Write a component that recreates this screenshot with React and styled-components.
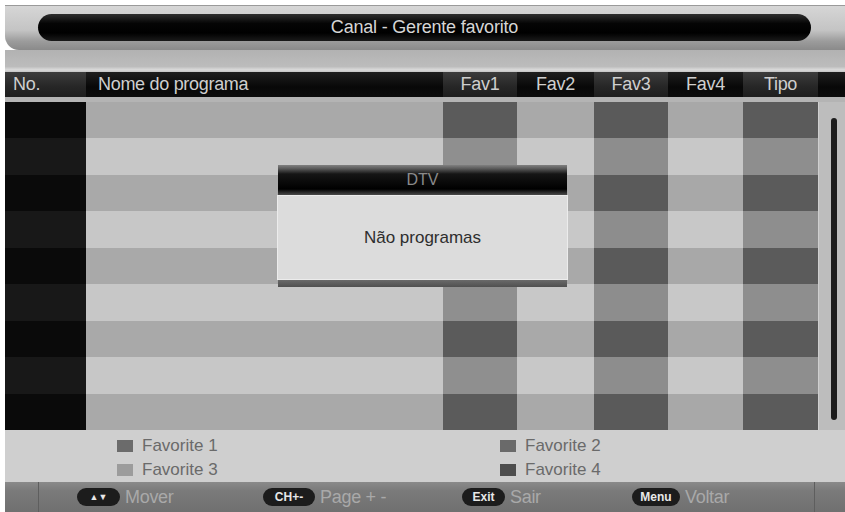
import React from "react";
import styled, { createGlobalStyle } from "styled-components";

const GlobalStyle = createGlobalStyle`
  html, body { margin: 0; padding: 0; background: #fff; }
  body { font-family: "Liberation Sans", Arial, sans-serif; }
`;

const COLS = "81px 357px 74px 77px 74px 75px 75px";

const Screen = styled.div`
  position: relative;
  width: 845px;
  height: 512px;
  box-sizing: border-box;
  padding: 5px 0 0 5px;
  display: flex;
  flex-direction: column;
  background: #fff;
  overflow: hidden;
`;

const TopPanel = styled.div`
  height: 45px;
  box-sizing: border-box;
  padding: 8px 34px 0 33px;
  border-top: 1px solid #9a9a9a;
  border-bottom-left-radius: 14px;
  background: linear-gradient(#d6d6d6 0%, #c4c4c4 55%, #9c9c9c 80%, #8a8a8a 100%);
`;

const TitlePill = styled.div`
  height: 27px;
  border-radius: 14px;
  background: linear-gradient(#2e2e2e 0%, #050505 35%, #000 70%, #1a1a1a 100%);
  color: #d6d6d6;
  font-size: 18px;
  display: flex;
  align-items: center;
  justify-content: center;
  letter-spacing: -0.2px;
`;

const Strip = styled.div`
  height: 22px;
  background: linear-gradient(#b2b2b2 0%, #bcbcbc 75%, #dadada 90%, #c4c4c4 100%);
`;

const Header = styled.div`
  display: grid;
  grid-template-columns: ${COLS} 1fr;
  height: 25px;
`;

const HeadCell = styled.div`
  display: flex;
  align-items: center;
  justify-content: ${(p) => (p.$left ? "flex-start" : "center")};
  padding-left: ${(p) => p.$pad || 0}px;
  background: ${(p) =>
    p.$light
      ? "linear-gradient(#3c3c3c, #262626 60%, #1e1e1e)"
      : "linear-gradient(#1e1e1e, #080808 60%, #0c0c0c)"};
  color: #cfcfcf;
  font-size: 18px;
  letter-spacing: -0.3px;
`;

const Body = styled.div`
  display: flex;
  height: 333px;
  box-sizing: border-box;
  padding-top: 5px;
  background: #b4b4b4;
`;

const Rows = styled.div`
  display: grid;
  grid-template-columns: ${COLS};
  grid-template-rows: repeat(9, 1fr);
  width: 813px;
`;

const Cell = styled.div`
  background: ${(p) => p.$color};
`;

const ScrollTrack = styled.div`
  flex: 1;
  background: #bdbdbd;
  padding: 16px 0 10px 12px;
  box-sizing: border-box;
  border-left: 1px solid #cfcfcf;
`;

const ScrollLine = styled.div`
  width: 6px;
  height: 100%;
  border-radius: 3px;
  background: #1c1c1c;
`;

const Legend = styled.div`
  height: 52px;
  box-sizing: border-box;
  padding: 9px 0 0 112px;
  background: #cfcfcf;
  display: grid;
  grid-template-columns: 383px 1fr;
  grid-auto-rows: 24px;
`;

const LegendItem = styled.div`
  display: flex;
  align-items: center;
  gap: 9px;
  height: 14px;
  color: #6a6a6a;
  font-size: 17px;
`;

const Swatch = styled.span`
  width: 16px;
  height: 12px;
  background: ${(p) => p.$color};
`;

const BottomBar = styled.div`
  height: 30px;
  display: flex;
  align-items: center;
  background: linear-gradient(#8a8a8a 0%, #7a7a7a 30%, #707070 100%);
`;

const Separator = styled.div`
  width: 1px;
  height: 100%;
  background: #5e5e5e;
  margin-left: ${(p) => p.$ml}px;
`;

const Hint = styled.div`
  display: flex;
  align-items: center;
  gap: 5px;
  margin-left: ${(p) => p.$ml}px;
  width: ${(p) => p.$w}px;
`;

const KeyPill = styled.span`
  height: 18px;
  min-width: ${(p) => p.$w}px;
  box-sizing: border-box;
  padding: 0 6px;
  border-radius: 9px;
  background: #1c1c1c;
  color: #e8e8e8;
  font-size: ${(p) => p.$fs || 12}px;
  font-weight: bold;
  display: flex;
  align-items: center;
  justify-content: center;
`;

const HintLabel = styled.span`
  color: #a9a9a9;
  font-size: 18px;
  letter-spacing: -0.3px;
`;

const Dialog = styled.div`
  position: absolute;
  left: 277px;
  top: 165px;
  width: 291px;
  display: flex;
  flex-direction: column;
`;

const DialogTitle = styled.div`
  height: 30px;
  box-sizing: border-box;
  margin: 0 1px;
  background: linear-gradient(#808080 0%, #5a5a5a 12%, #151515 30%, #000 80%, #4a4a4a 100%);
  color: #8a8a8a;
  font-size: 16px;
  display: flex;
  align-items: center;
  justify-content: center;
`;

const DialogBody = styled.div`
  height: 85px;
  box-sizing: border-box;
  background: #dcdcdc;
  border: 1px solid #ececec;
  color: #2e2e2e;
  font-size: 17px;
  display: flex;
  align-items: center;
  justify-content: center;
`;

const DialogFoot = styled.div`
  height: 7px;
  margin: 0 1px;
  background: linear-gradient(#6a6a6a, #505050);
`;

const headers = [
  { label: "No.", left: true, pad: 8, light: true },
  { label: "Nome do programa", left: true, pad: 12 },
  { label: "Fav1", light: true },
  { label: "Fav2" },
  { label: "Fav3", light: true },
  { label: "Fav4" },
  { label: "Tipo", light: true },
  { label: "" },
];

// [odd row, even row] per column
const columnTones = [
  ["#0a0a0a", "#181818"],
  ["#a9a9a9", "#c7c7c7"],
  ["#5b5b5b", "#8f8f8f"],
  ["#a9a9a9", "#c8c8c8"],
  ["#5a5a5a", "#8d8d8d"],
  ["#a8a8a8", "#c8c8c8"],
  ["#5b5b5b", "#8e8e8e"],
];

const legend = [
  { label: "Favorite 1", color: "#6b6b6b" },
  { label: "Favorite 2", color: "#6a6a6a" },
  { label: "Favorite 3", color: "#9c9c9c" },
  { label: "Favorite 4", color: "#4d4d4d" },
];

export default function App() {
  const rows = Array.from({ length: 9 }, (_, i) => i);

  return (
    <>
      <GlobalStyle />
      <Screen>
        <TopPanel>
          <TitlePill>Canal - Gerente favorito</TitlePill>
        </TopPanel>
        <Strip />

        <Header>
          {headers.map((h, i) => (
            <HeadCell key={i} $left={h.left} $pad={h.pad} $light={h.light}>
              {h.label}
            </HeadCell>
          ))}
        </Header>

        <Body>
          <Rows>
            {rows.map((r) =>
              columnTones.map((tone, c) => (
                <Cell key={r + "-" + c} $color={tone[r % 2]} />
              ))
            )}
          </Rows>
          <ScrollTrack>
            <ScrollLine />
          </ScrollTrack>
        </Body>

        <Legend>
          {legend.map((l) => (
            <LegendItem key={l.label}>
              <Swatch $color={l.color} />
              {l.label}
            </LegendItem>
          ))}
        </Legend>

        <BottomBar>
          <Separator $ml={33} />
          <Hint $ml={38} $w={185}>
            <KeyPill $w={43} $fs={9}>▲▼</KeyPill>
            <HintLabel>Mover</HintLabel>
          </Hint>
          <Hint $ml={1} $w={199}>
            <KeyPill $w={52}>CH+-</KeyPill>
            <HintLabel>Page + -</HintLabel>
          </Hint>
          <Hint $ml={0} $w={170}>
            <KeyPill $w={43}>Exit</KeyPill>
            <HintLabel>Sair</HintLabel>
          </Hint>
          <Hint $ml={0} $w={182}>
            <KeyPill $w={48}>Menu</KeyPill>
            <HintLabel>Voltar</HintLabel>
          </Hint>
          <Separator $ml={0} />
        </BottomBar>

        <Dialog>
          <DialogTitle>DTV</DialogTitle>
          <DialogBody>Não programas</DialogBody>
          <DialogFoot />
        </Dialog>
      </Screen>
    </>
  );
}
